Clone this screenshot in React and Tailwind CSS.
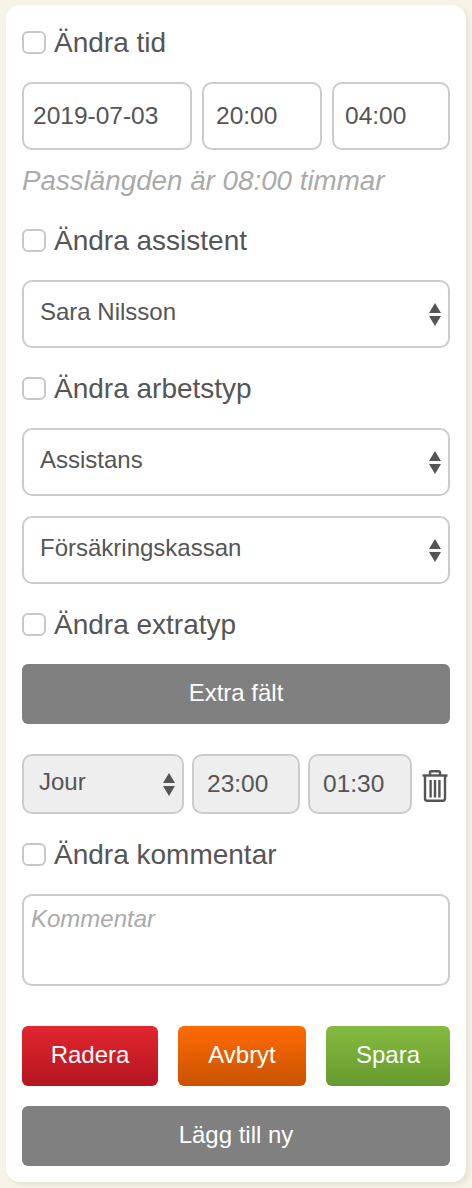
import React from 'react';

const font = { fontFamily: '"Liberation Sans", Arial, sans-serif' };

const CheckRow = ({ label, className = '' }) => (
  <label className={`flex items-center h-8 text-[28px] leading-8 text-[#555] ${className}`}>
    <span className="w-6 h-[23px] shrink-0 mr-2 rounded-[6px] border-2 border-[#c8c8c8] bg-white" />
    <span className="pt-0.5">{label}</span>
  </label>
);

const Arrows = () => (
  <svg width="12" height="23" viewBox="0 0 12 23" className="shrink-0">
    <path d="M6 0 L12 10 H0 Z M0 13 H12 L6 23 Z" fill="#555" />
  </svg>
);

const Select = ({ value, className = '', pad = 'pl-4 pr-[7px]' }) => (
  <div className={`flex items-center justify-between border-2 border-[#ccc] rounded-[10px] text-[24px] text-[#555] ${pad} ${className}`}>
    <span className="-mt-1">{value}</span>
    <Arrows />
  </div>
);

const Input = ({ value, className = '' }) => (
  <div className={`flex items-center border-2 border-[#ccc] rounded-[10px] text-[24.5px] text-[#555] ${className}`}>
    {value}
  </div>
);

const Btn = ({ children, className = '' }) => (
  <div className={`flex items-center justify-center h-[60px] pb-0.5 rounded-[6px] text-[24px] text-white ${className}`}>
    {children}
  </div>
);

const Trash = () => (
  <svg width="26" height="32" viewBox="0 0 26 32" fill="none" stroke="#555" strokeWidth="2.4" className="block">
    <path d="M0.5 5.5 H25.5" />
    <path d="M8 5 V2.8 Q8 1.2 9.6 1.2 H16.4 Q18 1.2 18 2.8 V5" />
    <path d="M3 6 V28.5 Q3 30.7 5.2 30.7 H20.8 Q23 30.7 23 28.5 V6" />
    <path d="M8.6 10 V27.5 M13 10 V27.5 M17.4 10 V27.5" strokeWidth="2.4" />
  </svg>
);

export default function App() {
  return (
    <div style={font} className="w-[472px] h-[1188px] bg-[#f7f3e6] pt-[5px] pl-[6px]">
      <div className="w-[460px] h-[1177px] bg-white rounded-[14px] pt-[21px] px-4 shadow-[3px_3px_5px_rgba(90,90,90,0.1)]">
        <CheckRow label="Ändra tid" />
        <div className="flex gap-[10px] mt-6 h-[68px]">
          <Input value="2019-07-03" className="w-[170px] pl-[9px]" />
          <Input value="20:00" className="w-[120px] pl-[12px]" />
          <Input value="04:00" className="w-[118px] pl-[11px]" />
        </div>
        <p className="mt-[15px] mb-[-1px] h-8 text-[27.75px] leading-8 italic text-[#aaa]">Passlängden är 08:00 timmar</p>
        <CheckRow label="Ändra assistent" className="mt-7" />
        <Select value="Sara Nilsson" className="mt-6 h-[68px]" />
        <CheckRow label="Ändra arbetstyp" className="mt-6" />
        <Select value="Assistans" className="mt-6 h-[68px]" />
        <Select value="Försäkringskassan" className="mt-5 h-[68px]" />
        <CheckRow label="Ändra extratyp" className="mt-6" />
        <Btn className="mt-6 bg-[#808080]">Extra fält</Btn>
        <div className="flex items-center mt-[30px] h-[60px]">
          <Select value="Jour" className="w-[162px] h-full bg-[#eee]" pad="pl-[15px] pr-[7px]" />
          <Input value="23:00" className="w-[108px] h-full ml-[8px] bg-[#eee] pl-[13px]" />
          <Input value="01:30" className="w-[104px] h-full ml-[8px] bg-[#eee] pl-[13px]" />
          <span className="ml-[10px] mt-1"><Trash /></span>
        </div>
        <CheckRow label="Ändra kommentar" className="mt-6" />
        <div className="mt-6 h-[92px] border-2 border-[#ccc] rounded-[10px] pl-[7px] pt-[9px] text-[24px] leading-7 italic text-[#aaa]">
          Kommentar
        </div>
        <div className="flex justify-between mt-10">
          <Btn className="w-[136px] bg-gradient-to-b from-[#e2262f] to-[#b5161f]">Radera</Btn>
          <Btn className="w-[128px] bg-gradient-to-b from-[#ff6a00] to-[#c95300]">Avbryt</Btn>
          <Btn className="w-[124px] bg-gradient-to-b from-[#85bb40] to-[#659a2e]">Spara</Btn>
        </div>
        <Btn className="mt-5 bg-[#808080]">Lägg till ny</Btn>
      </div>
    </div>
  );
}
